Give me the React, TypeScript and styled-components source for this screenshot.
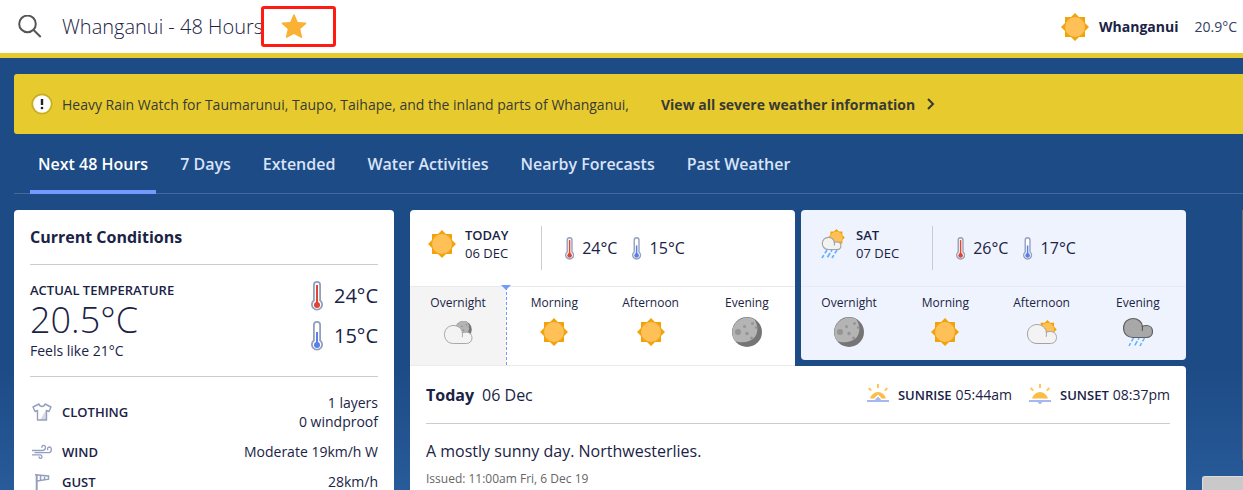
import React from "react";
import styled, { createGlobalStyle, css } from "styled-components";

const NAVY = "#1a2345";

const GlobalStyle = createGlobalStyle`
  *, *::before, *::after { box-sizing: border-box; }
  body {
    margin: 0;
    font-family: "Open Sans", "Noto Sans", sans-serif;
    font-size: 14px;
    color: ${NAVY};
    background: #1d4b86;
  }
  h1, h2, h3, p, dl, dd, dt, ul { margin: 0; padding: 0; font: inherit; }
  svg { display: block; flex: none; }
`;

const Page = styled.div`
  display: flex;
  flex-direction: column;
  height: 100vh;
  overflow: hidden;
`;

/* ---------- header ---------- */

const Header = styled.header`
  flex: none;
  display: flex;
  align-items: center;
  height: 58px;
  padding: 0 6px 0 18px;
  background: #fff;
  border-bottom: 5px solid #e7cb2e;
`;

const IconButton = styled.button`
  display: flex;
  padding: 0;
  border: 0;
  background: none;
  cursor: pointer;
`;

const Title = styled.h1`
  margin-left: 20px;
  font-size: 20px;
  line-height: 28px;
  font-weight: 300;
  white-space: nowrap;
`;

const FavouriteButton = styled(IconButton)`
  width: 75px;
  height: 41px;
  margin-left: -2px;
  padding-left: 17px;
  align-items: center;
  border: 3px solid #ff1b12;
  border-radius: 3px;
`;

const HeaderPlace = styled.a`
  display: flex;
  align-items: center;
  margin-left: auto;
  color: inherit;
  text-decoration: none;
  white-space: nowrap;
`;

const PlaceName = styled.span`
  margin: 0 16px 0 10px;
  font-weight: 700;
`;

const PlaceTemp = styled.span`
  color: #353f63;
`;

/* ---------- warning and tabs ---------- */

const Body = styled.div`
  flex: 1;
  min-height: 0;
  display: flex;
  flex-direction: column;
  padding: 16px 0 0 14px;
  background: linear-gradient(#1d4b86 72%, #285b99);
`;

const Warning = styled.div`
  flex: none;
  display: flex;
  align-items: center;
  height: 60px;
  padding: 0 17px;
  color: #393a35;
  background: #e7cb2e;
  border-radius: 3px 0 0 3px;
  white-space: nowrap;
`;

const WarningText = styled.p`
  margin-left: 9px;
`;

const WarningLink = styled.a`
  display: flex;
  align-items: center;
  gap: 12px;
  margin-left: 32px;
  color: inherit;
  font-weight: 700;
  text-decoration: none;
`;

const Tabs = styled.nav`
  flex: none;
  display: flex;
  gap: 16px;
  height: 60px;
  padding-left: 16px;
  box-shadow: inset 0 -1px #44699f;
`;

const Tab = styled.a<{ $active?: boolean }>`
  padding: 0 8px;
  font-size: 16px;
  line-height: 60px;
  font-weight: 600;
  white-space: nowrap;
  text-decoration: none;
  color: ${(p) => (p.$active ? "#fff" : "#d9e3f8")};
  ${(p) => p.$active && css`box-shadow: inset 0 -4px #7599ff;`}
`;

/* ---------- main columns ---------- */

const Columns = styled.main`
  flex: 1;
  min-height: 0;
  display: flex;
  margin-top: 16px;
`;

const Conditions = styled.section`
  flex: none;
  width: 380px;
  padding: 0 16px;
  background: #fff;
  border-radius: 4px 4px 0 0;
`;

const Forecast = styled.section`
  flex: 1;
  display: flex;
  flex-direction: column;
  margin: 0 56px 0 16px;
`;

const SideColumn = styled.aside`
  flex: none;
  width: 1px;
  height: 250px;
  background: #6b6b6b;
`;

const CardTitle = styled.h2`
  height: 55px;
  font-size: 16px;
  line-height: 54px;
  font-weight: 700;
  border-bottom: 1px solid #ccc;
`;

const TemperatureRow = styled.div`
  display: flex;
  justify-content: space-between;
  height: 112px;
  padding-top: 16px;
  border-bottom: 1px solid #ccc;
`;

const Caps = styled.span`
  font-size: 13px;
  line-height: 18px;
  font-weight: 600;
  text-transform: uppercase;
`;

const ActualTemp = styled.p`
  font-size: 36px;
  line-height: 42px;
  font-weight: 300;
`;

const FeelsLike = styled.p`
  line-height: 20px;
`;

const HighLow = styled.div`
  display: flex;
  flex-direction: column;
  gap: 10px;
`;

const Reading = styled.span<{ $size: number; $gap: number }>`
  display: flex;
  align-items: center;
  gap: ${(p) => p.$gap}px;
  font-size: ${(p) => p.$size}px;
  line-height: 30px;
`;

const Details = styled.dl`
  display: flex;
  flex-direction: column;
  gap: 11px;
  padding-top: 16px;
`;

const DetailRow = styled.div`
  display: flex;
  align-items: center;
  line-height: 19px;
`;

const DetailLabel = styled.dt`
  display: flex;
  align-items: center;
  gap: 10px;
  margin-left: 2px;
`;

const DetailValue = styled.dd`
  margin-left: auto;
  text-align: right;
`;

/* ---------- day cards ---------- */

const Days = styled.div`
  flex: none;
  display: grid;
  grid-template-columns: 1fr 1fr;
  gap: 6px;
`;

const DayCard = styled.article<{ $selected?: boolean }>`
  display: flex;
  flex-direction: column;
  height: ${(p) => (p.$selected ? 156 : 150)}px;
  background: ${(p) => (p.$selected ? "#fff" : "#eff3fd")};
  border-radius: ${(p) => (p.$selected ? "4px 4px 0 0" : "4px")};
  ${(p) => p.$selected && css`border-bottom: 1px solid #ececee;`}
`;

const DayHeader = styled.header`
  display: flex;
  align-items: center;
  height: 77px;
  padding-left: 18px;
  border-bottom: 1px solid #e8eaf0;
`;

const DayIcon = styled.div`
  margin-bottom: 8px;
`;

const DayName = styled.div`
  display: flex;
  flex-direction: column;
  width: 77px;
  height: 44px;
  margin-left: 9px;
  border-right: 1px solid #ccc;
`;

const DayDate = styled.span`
  font-size: 13px;
  line-height: 18px;
`;

const DayReadings = styled.div`
  display: flex;
  gap: 15px;
  margin-left: 23px;
`;

const Periods = styled.ul`
  flex: 1;
  display: grid;
  grid-template-columns: repeat(4, 1fr);
  list-style: none;
`;

const Period = styled.li<{ $past?: boolean }>`
  position: relative;
  display: flex;
  flex-direction: column;
  align-items: center;
  padding-top: 8px;
  font-size: 12px;
  line-height: 16px;
  ${(p) =>
    p.$past &&
    css`
      background: #f4f4f4;
      &::before {
        content: "";
        position: absolute;
        top: 0;
        bottom: 0;
        right: -1px;
        border-left: 1px dashed #7599ff;
      }
      &::after {
        content: "";
        position: absolute;
        top: -2px;
        right: -5px;
        border: 5px solid transparent;
        border-top-color: #7599ff;
        border-bottom: 0;
      }
    `}
`;

const PeriodIcon = styled.div`
  display: flex;
  align-items: center;
  height: 30px;
  margin-top: 6px;
`;

/* ---------- selected day ---------- */

const DayDetail = styled.article`
  flex: 1;
  padding: 0 16px;
  background: #fff;
  border-radius: 0 4px 0 0;
`;

const DetailHeader = styled.header`
  display: flex;
  align-items: center;
  height: 58px;
  border-bottom: 1px solid #ccc;
`;

const DetailTitle = styled.h3`
  display: flex;
  gap: 8px;
  margin-right: auto;
  font-size: 16px;
`;

const SunTime = styled.div`
  display: flex;
  align-items: center;
  margin-left: 17px;
`;

const SunLabel = styled(Caps)`
  margin: 0 4px 0 9px;
`;

const Summary = styled.p`
  padding-top: 15px;
  font-size: 16px;
  line-height: 24px;
`;

const Issued = styled.p`
  margin-top: 7px;
  font-size: 12px;
  line-height: 18px;
  color: #666;
`;

const FeedbackTab = styled.button`
  position: fixed;
  right: 0;
  bottom: 0;
  width: 41px;
  height: 14px;
  border: 1px solid #dcdcdc;
  border-width: 1px 0 0 1px;
  border-radius: 3px 0 0 0;
  background: #c9c9c9;
`;

/* ---------- icons ---------- */

const SearchIcon = () => (
  <svg width="24" height="24" viewBox="0 0 24 24" fill="none" stroke="#555" strokeWidth="2">
    <circle cx="9.5" cy="8.9" r="8.3" />
    <path d="M15.3 14.700 22.7 22" />
  </svg>
);

const StarIcon = () => (
  <svg width="26" height="26" viewBox="0 0 26 26" fill="#f9b233">
    <path d="M13 .2 Q13.5 .2 13.8 1 L16.8 8.100 24.600 8.600 Q25.900 9 25 10 L19.300 15 21.200 23 Q21.200 24.300 20 23.800 L13 20 6 23.800 Q4.800 24.300 4.800 23 L6.700 15 1 10 Q.1 9 1.400 8.600 L9.200 8.100 12.2 1 Q12.5 .2 13 .2Z" />
  </svg>
);

const SunShape = () => (
  <g>
    <path fill="#f0a30a" d="M4 4h20v20H4z M14 0 28 14 14 28 0 14z" />
    <circle cx="14" cy="14" r="10" fill="#ffc058" />
  </g>
);

const SunIcon = () => (
  <svg width="28" height="28" viewBox="0 0 28 28">
    <SunShape />
  </svg>
);

const MoonShape = () => (
  <g>
    <circle cx="15" cy="15" r="15" fill="#757575" />
    <path fill="#b4b4b4" d="M22 2C27 9 26 17 22 21C17 25.500 9 26.500 3 24A15 15 0 0 1 22 2Z" />
    <g fill="#959595">
      <circle cx="6" cy="15" r="3" />
      <circle cx="12.500" cy="9.500" r="1.500" />
      <circle cx="20.500" cy="6.500" r="1.500" />
      <circle cx="15" cy="16.500" r="1.700" />
      <circle cx="24" cy="10.500" r="1.200" />
      <circle cx="19.500" cy="21" r="1.500" />
    </g>
  </g>
);

const MoonIcon = () => (
  <svg width="30" height="30" viewBox="0 0 30 30">
    <MoonShape />
  </svg>
);

const CloudShape = ({ fill, stroke }: { fill: string; stroke: string }) => (
  <g fill={fill} stroke={stroke} strokeLinecap="round">
    <path d="M10 .5C15 .5 19 4 19.300 8.200C20.500 7.700 22 7.500 23.500 7.500C27 7.500 29.500 10 29.500 13.500C29.500 17 27 19.500 23.500 19.500H10C4.500 19.500 .5 15.500 .5 10S4.500 .5 10 .5Z" />
    <path fill="none" d="M19.300 8.200C19.600 9.500 19.600 11 19.300 12.500" />
  </g>
);

const CloudMoonIcon = () => (
  <svg width="30" height="30" viewBox="0 0 30 30">
    <g transform="translate(12 4) scale(.56)">
      <MoonShape />
    </g>
    <g transform="translate(1 8) scale(.95)">
      <CloudShape fill="#f2f3f2" stroke="#a3a3a3" />
    </g>
  </svg>
);

const CloudSunIcon = () => (
  <svg width="30" height="30" viewBox="0 0 30 30">
    <g transform="translate(11 3) scale(.67)">
      <SunShape />
    </g>
    <g transform="translate(0 7)">
      <CloudShape fill="#f2f3f2" stroke="#a3a3a3" />
    </g>
  </svg>
);

const RainIcon = () => (
  <svg width="30" height="30" viewBox="0 0 30 30">
    <g transform="translate(0 1)" strokeWidth="1.200">
      <CloudShape fill="#a8a8a8" stroke="#5f5f5f" />
    </g>
    <g stroke="#62b0ff" strokeWidth="1.500" strokeDasharray="4 2">
      <path d="M10.500 21 6 29" />
      <path d="M16 21 11.500 29" strokeDasharray="2 1.500 5" />
      <path d="M21.500 21 17 29" />
    </g>
  </svg>
);

const ShowersIcon = () => (
  <svg width="28" height="30" viewBox="0 0 28 30">
    <g transform="translate(9 0) scale(.6)">
      <SunShape />
    </g>
    <g transform="translate(3 8) scale(.64)" strokeWidth="1.800">
      <CloudShape fill="#f2f3f2" stroke="#a3a3a3" />
    </g>
    <g stroke="#62b0ff" strokeWidth="1.700" strokeDasharray="4 2">
      <path d="M8 21 3 29" />
      <path d="M13 21 8 29" strokeDasharray="2 1.500 5" />
      <path d="M18 21 13 29" />
    </g>
  </svg>
);

const ThermometerIcon = ({ warm, height }: { warm?: boolean; height: number }) => {
  const color = warm ? "#dc4632" : "#5880ea";
  return (
    <svg width={height * 0.4} height={height} viewBox="0 0 12 30">
      <path
        d="M2.900 4A3.100 3.100 0 0 1 9.100 4V19.500A5.100 5.100 0 1 1 2.900 19.500Z"
        fill="#fff"
        stroke="#949fbd"
        strokeWidth="1.800"
      />
      <path d={warm ? "M6 4V24" : "M6 11V24"} stroke={color} strokeWidth="2" />
      <circle cx="6" cy="24" r="3" fill={color} />
    </svg>
  );
};

const ShirtIcon = () => (
  <svg width="20" height="18" viewBox="0 0 20 18">
    <path d="M14 7V17H8Z" fill="#d5dae5" />
    <path
      d="M7 1 1 4 3 8.500 5.500 7.500V17H14.500V7.500L17 8.500 19 4 13 1C12 4.300 8 4.300 7 1Z"
      fill="none"
      stroke="#949fbd"
      strokeWidth="1.400"
      strokeLinejoin="round"
    />
  </svg>
);

const WindIcon = () => (
  <svg width="20" height="16" viewBox="0 0 20 16" fill="none" stroke="#949fbd" strokeWidth="1.300">
    <path d="M0 6.500H10.500C14 6.500 14.500 1.300 11.500 1.300C10 1.300 9.500 2.800 10.300 3.700" />
    <path d="M2.500 8.700H16.500C20 8.700 20.300 3 17.300 3C15.500 3 15 5 16.200 6" />
    <path d="M0 10.800H8C10.500 10.800 10.500 14.300 8.500 14.300C7.300 14.300 6.800 13.200 7.500 12.500" />
  </svg>
);

const GustIcon = () => (
  <svg width="20" height="18" viewBox="0 0 20 18" fill="none" stroke="#949fbd" strokeWidth="1.500">
    <path d="M4.700 1V18" strokeWidth="2" />
    <path d="M3 1.700 16.500 3V6.200L5 8M8.500 2.500V7.500M12.500 3V6.800" />
  </svg>
);

const SunHorizonIcon = ({ setting }: { setting?: boolean }) => (
  <svg width="22" height="22" viewBox="0 0 22 22">
    <g stroke="#ffc65c" strokeWidth="2">
      <path d="M11 0V4M1.700 4 4.200 6.600M20.300 4 17.800 6.600" />
    </g>
    <path d="M3 14.500A8.200 8.200 0 0 1 19 14.500Z" fill="#fbbd45" />
    <path d="M0 17H22" stroke="#a5b7f4" strokeWidth="2" />
    {setting ? (
      <path d="M7.500 17 11 20.500 14.500 17Z" fill="#a5b7f4" />
    ) : (
      <>
        <path d="M7 14.500 11 10.500 15 14.500Z" fill="#fff" />
        <path d="M7.500 16.500 11 12.500 14.500 16.500Z" fill="#a5b7f4" />
      </>
    )}
  </svg>
);

const AlertIcon = () => (
  <svg width="22" height="22" viewBox="0 0 22 22">
    <circle cx="11" cy="11" r="9.700" fill="#fff" stroke="#c9ae25" strokeWidth="1.800" />
    <path d="M11 6V12" stroke="#222" strokeWidth="2.400" />
    <circle cx="11" cy="15" r="1.300" fill="#222" />
  </svg>
);

const ChevronIcon = () => (
  <svg width="8" height="12" viewBox="0 0 8 12" fill="none" stroke="#393a35" strokeWidth="2">
    <path d="M1 1 6 6 1 11" />
  </svg>
);

/* ---------- data ---------- */

const tabs = ["Next 48 Hours", "7 Days", "Extended", "Water Activities", "Nearby Forecasts", "Past Weather"];

const details = [
  { icon: <ShirtIcon />, label: "Clothing", values: ["1 layers", "0 windproof"] },
  { icon: <WindIcon />, label: "Wind", values: ["Moderate 19km/h W"] },
  { icon: <GustIcon />, label: "Gust", values: ["28km/h"] },
];

const days = [
  {
    name: "Today",
    date: "06 DEC",
    icon: <SunIcon />,
    high: 24,
    low: 15,
    selected: true,
    periods: [
      { name: "Overnight", icon: <CloudMoonIcon />, past: true },
      { name: "Morning", icon: <SunIcon /> },
      { name: "Afternoon", icon: <SunIcon /> },
      { name: "Evening", icon: <MoonIcon /> },
    ],
  },
  {
    name: "Sat",
    date: "07 DEC",
    icon: <ShowersIcon />,
    high: 26,
    low: 17,
    selected: false,
    periods: [
      { name: "Overnight", icon: <MoonIcon />, past: false },
      { name: "Morning", icon: <SunIcon /> },
      { name: "Afternoon", icon: <CloudSunIcon /> },
      { name: "Evening", icon: <RainIcon /> },
    ],
  },
];

export default function App() {
  return (
    <Page>
      <GlobalStyle />
      <Header>
        <IconButton aria-label="Search">
          <SearchIcon />
        </IconButton>
        <Title>Whanganui - 48 Hours</Title>
        <FavouriteButton aria-label="Favourite">
          <StarIcon />
        </FavouriteButton>
        <HeaderPlace href="#whanganui">
          <SunIcon />
          <PlaceName>Whanganui</PlaceName>
          <PlaceTemp>20.9°C</PlaceTemp>
        </HeaderPlace>
      </Header>

      <Body>
        <Warning>
          <AlertIcon />
          <WarningText>
            Heavy Rain Watch for Taumarunui, Taupo, Taihape, and the inland parts of Whanganui,
          </WarningText>
          <WarningLink href="#warnings">
            View all severe weather information
            <ChevronIcon />
          </WarningLink>
        </Warning>

        <Tabs>
          {tabs.map((tab, i) => (
            <Tab key={tab} href="#forecast" $active={i === 0}>
              {tab}
            </Tab>
          ))}
        </Tabs>

        <Columns>
          <Conditions>
            <CardTitle>Current Conditions</CardTitle>
            <TemperatureRow>
              <div>
                <Caps as="h3">Actual Temperature</Caps>
                <ActualTemp>20.5°C</ActualTemp>
                <FeelsLike>Feels like 21°C</FeelsLike>
              </div>
              <HighLow>
                <Reading $size={20} $gap={11}>
                  <ThermometerIcon warm height={30} />
                  24°C
                </Reading>
                <Reading $size={20} $gap={11}>
                  <ThermometerIcon height={30} />
                  15°C
                </Reading>
              </HighLow>
            </TemperatureRow>
            <Details>
              {details.map((d) => (
                <DetailRow key={d.label}>
                  <DetailLabel>
                    {d.icon}
                    <Caps>{d.label}</Caps>
                  </DetailLabel>
                  <DetailValue>
                    {d.values.map((v) => (
                      <div key={v}>{v}</div>
                    ))}
                  </DetailValue>
                </DetailRow>
              ))}
            </Details>
          </Conditions>

          <Forecast>
            <Days>
              {days.map((day) => (
                <DayCard key={day.name} $selected={day.selected}>
                  <DayHeader>
                    <DayIcon>{day.icon}</DayIcon>
                    <DayName>
                      <Caps>{day.name}</Caps>
                      <DayDate>{day.date}</DayDate>
                    </DayName>
                    <DayReadings>
                      <Reading $size={16} $gap={8}>
                        <ThermometerIcon warm height={23} />
                        {day.high}°C
                      </Reading>
                      <Reading $size={16} $gap={8}>
                        <ThermometerIcon height={23} />
                        {day.low}°C
                      </Reading>
                    </DayReadings>
                  </DayHeader>
                  <Periods>
                    {day.periods.map((p) => (
                      <Period key={p.name} $past={p.past}>
                        {p.name}
                        <PeriodIcon>{p.icon}</PeriodIcon>
                      </Period>
                    ))}
                  </Periods>
                </DayCard>
              ))}
            </Days>
            <DayDetail>
              <DetailHeader>
                <DetailTitle>
                  <strong>Today</strong>
                  <span>06 Dec</span>
                </DetailTitle>
                <SunTime>
                  <SunHorizonIcon />
                  <SunLabel>Sunrise</SunLabel>
                  05:44am
                </SunTime>
                <SunTime>
                  <SunHorizonIcon setting />
                  <SunLabel>Sunset</SunLabel>
                  08:37pm
                </SunTime>
              </DetailHeader>
              <Summary>A mostly sunny day. Northwesterlies.</Summary>
              <Issued>Issued: 11:00am Fri, 6 Dec 19</Issued>
            </DayDetail>
          </Forecast>
          <SideColumn />
        </Columns>
      </Body>
      <FeedbackTab aria-label="Feedback" />
    </Page>
  );
}
